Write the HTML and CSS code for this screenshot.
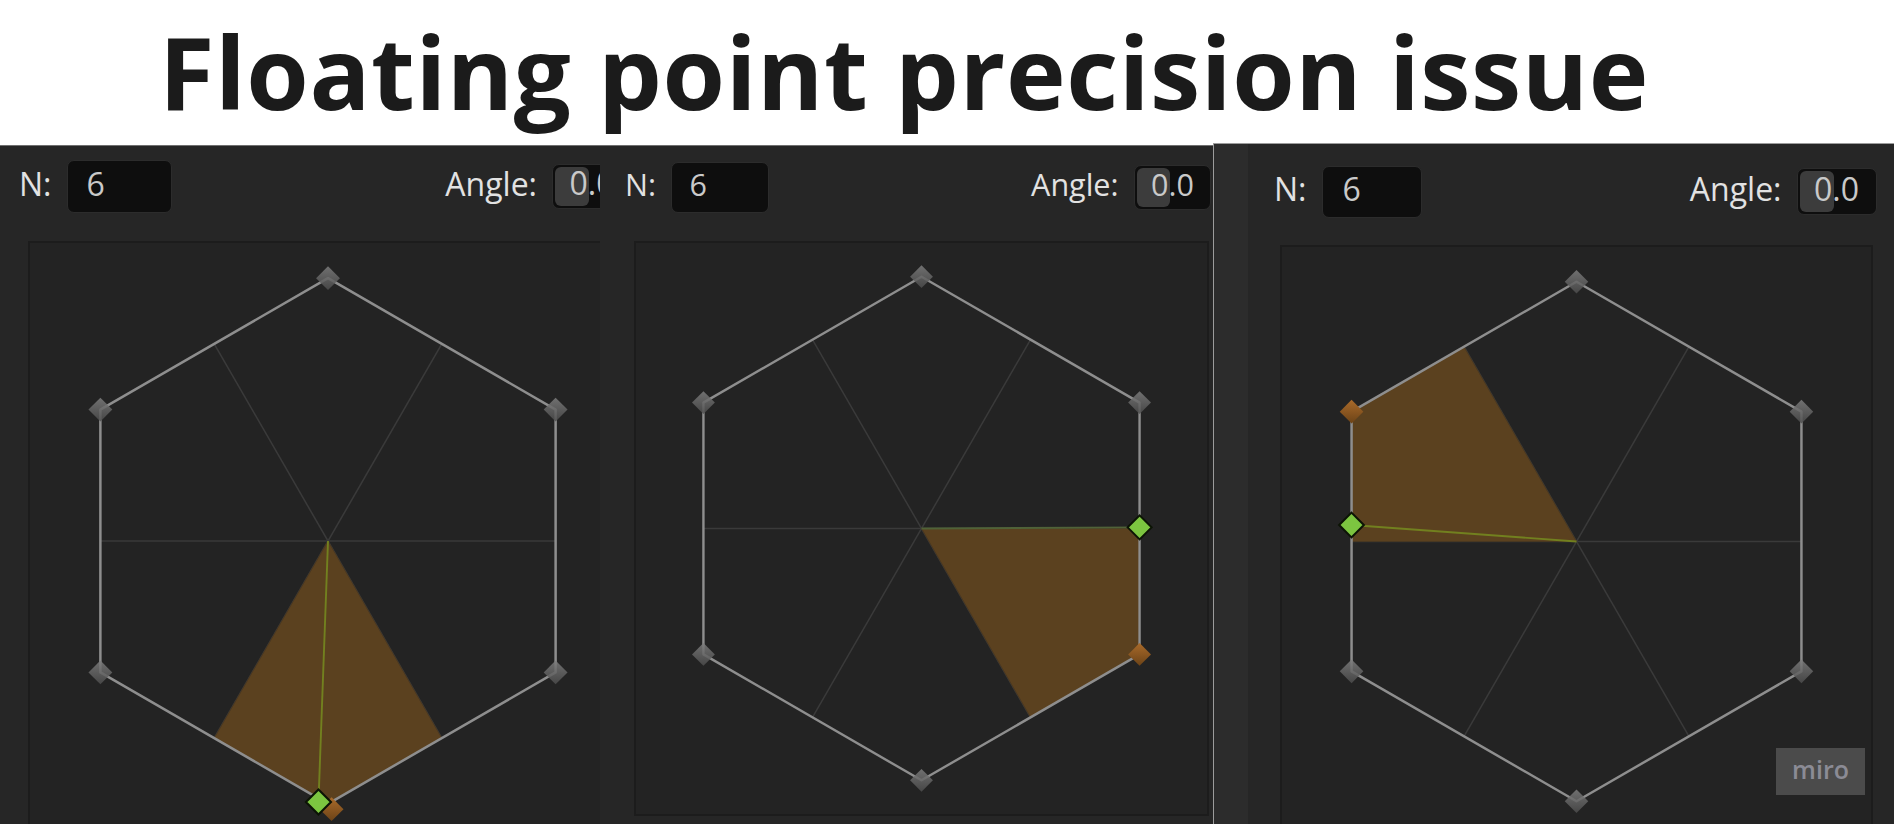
FILE: index.html
```html
<!DOCTYPE html>
<html lang="en">
<head>
<meta charset="utf-8">
<title>Floating point precision issue</title>
<link rel="stylesheet" href="styles.css">
</head>
<body>
<div class="page">
  <h1 class="title">Floating point precision issue</h1>
  <div class="panels">

    <section class="panel panel-1">
      <div class="window">
        <div class="toolbar">
          <div class="field"><span class="label">N:</span><span class="input input-n">6</span></div>
          <div class="field"><span class="label">Angle:</span><span class="input input-angle"><span class="grab"></span><span class="val">0.0</span></span></div>
        </div>
        <div class="canvas">
          <svg viewBox="0 0 1000 1000" preserveAspectRatio="none">
            <defs>
              <linearGradient id="g-grey" x1="0" y1="0" x2="0" y2="1">
                <stop offset="0" stop-color="#7e7e7e"/>
                <stop offset="1" stop-color="#4c4c4c"/>
              </linearGradient>
              <linearGradient id="g-orange" x1="0" y1="0" x2="0" y2="1">
                <stop offset="0" stop-color="#a96a2a"/>
                <stop offset="1" stop-color="#6c4317"/>
              </linearGradient>
              <polygon id="dia" points="0,-20 20,0 0,20 -20,0"/>
              <polygon id="dia-l" points="0,-21 21,0 0,21 -21,0"/>
            </defs>
            <g class="spokes">
              <line x1="118.1" y1="500" x2="881.9" y2="500"/>
              <line x1="309.05" y1="169.25" x2="690.95" y2="830.75"/>
              <line x1="690.95" y1="169.25" x2="309.05" y2="830.75"/>
            </g>
            <polygon class="wedge" points="500,500 309.05,830.75 500,941 690.95,830.75"/>
            <polygon class="hex" points="500,59 881.9,279.5 881.9,720.5 500,941 118.1,720.5 118.1,279.5"/>
            <line class="ray" x1="500" y1="500" x2="484" y2="938"/>
            <use href="#dia" class="d-grey" x="500" y="59"/>
            <use href="#dia" class="d-grey" x="881.9" y="279.5"/>
            <use href="#dia" class="d-grey" x="881.9" y="720.5"/>
            <use href="#dia" class="d-grey" x="118.1" y="720.5"/>
            <use href="#dia" class="d-grey" x="118.1" y="279.5"/>
            <use href="#dia" class="d-orange" x="506" y="950"/>
            <use href="#dia-l" class="d-green" x="484" y="938"/>
          </svg>
        </div>
      </div>
    </section>

    <section class="panel panel-2">
      <div class="window">
        <div class="toolbar">
          <div class="field"><span class="label">N:</span><span class="input input-n">6</span></div>
          <div class="field"><span class="label">Angle:</span><span class="input input-angle"><span class="grab"></span><span class="val">0.0</span></span></div>
        </div>
        <div class="canvas">
          <svg viewBox="0 0 1000 1000" preserveAspectRatio="none">
            <g class="spokes">
              <line x1="118.1" y1="500" x2="881.9" y2="500"/>
              <line x1="309.05" y1="169.25" x2="690.95" y2="830.75"/>
              <line x1="690.95" y1="169.25" x2="309.05" y2="830.75"/>
            </g>
            <polygon class="wedge" points="500,500 881.9,500 881.9,720.5 690.95,830.75"/>
            <polygon class="hex" points="500,59 881.9,279.5 881.9,720.5 500,941 118.1,720.5 118.1,279.5"/>
            <line class="ray ray-2" x1="500" y1="500" x2="882" y2="498"/>
            <use href="#dia" class="d-grey" x="500" y="59"/>
            <use href="#dia" class="d-grey" x="881.9" y="279.5"/>
            <use href="#dia" class="d-grey" x="500" y="941"/>
            <use href="#dia" class="d-grey" x="118.1" y="720.5"/>
            <use href="#dia" class="d-grey" x="118.1" y="279.5"/>
            <use href="#dia" class="d-orange" x="881.9" y="720.5"/>
            <use href="#dia-l" class="d-green" x="882" y="498"/>
          </svg>
        </div>
      </div>
    </section>

    <section class="panel panel-3">
      <div class="strip"></div>
      <div class="window">
        <div class="toolbar">
          <div class="field"><span class="label">N:</span><span class="input input-n">6</span></div>
          <div class="field"><span class="label">Angle:</span><span class="input input-angle"><span class="grab"></span><span class="val">0.0</span></span></div>
        </div>
        <div class="canvas">
          <svg viewBox="0 0 1000 1000" preserveAspectRatio="none">
            <g class="spokes">
              <line x1="118.1" y1="500" x2="881.9" y2="500"/>
              <line x1="309.05" y1="169.25" x2="690.95" y2="830.75"/>
              <line x1="690.95" y1="169.25" x2="309.05" y2="830.75"/>
            </g>
            <polygon class="wedge" points="500,500 118.1,500 118.1,279.5 309.05,169.25"/>
            <polygon class="hex" points="500,59 881.9,279.5 881.9,720.5 500,941 118.1,720.5 118.1,279.5"/>
            <line class="ray" x1="500" y1="500" x2="118" y2="472"/>
            <use href="#dia" class="d-grey" x="500" y="59"/>
            <use href="#dia" class="d-grey" x="881.9" y="279.5"/>
            <use href="#dia" class="d-grey" x="881.9" y="720.5"/>
            <use href="#dia" class="d-grey" x="500" y="941"/>
            <use href="#dia" class="d-grey" x="118.1" y="720.5"/>
            <use href="#dia" class="d-orange" x="118.1" y="279.5"/>
            <use href="#dia-l" class="d-green" x="118" y="472"/>
          </svg>
        </div>
      </div>
      <div class="badge">miro</div>
    </section>

  </div>
</div>
</body>
</html>
```
FILE: styles.css
```css
* {
  box-sizing: border-box;
  margin: 0;
  padding: 0;
}

html, body {
  width: 1894px;
  height: 824px;
  overflow: hidden;
  background: #ffffff;
}

body {
  font-family: "Open Sans", "Noto Sans", "DejaVu Sans", sans-serif;
}

.page {
  display: flex;
  flex-direction: column;
  height: 824px;
}

.title {
  flex: none;
  height: 145px;
  padding: 3px 0 0 159px;
  font-size: 101px;
  font-weight: 700;
  line-height: 1.362;
  letter-spacing: 0.55px;
  color: #1b1b1b;
  white-space: nowrap;
}

.panels {
  flex: 1;
  display: flex;
  align-items: stretch;
  min-height: 0;
}

.panel {
  position: relative;
  flex: none;
  display: flex;
  overflow: hidden;
  background: #262626;
  border-top: 1px solid #6f6f6f;
  color: #e2e2e2;
}

.panel-1 { width: 600px; }
.panel-2 { width: 613px; }
.panel-3 {
  flex: 1;
  margin-top: -2px;
  border-top-color: #9c9c9c;
  border-left: 1px solid #9c9c9c;
}

.strip {
  flex: none;
  width: 34px;
  background: #2c2c2c;
}

.window {
  flex: none;
  display: flex;
  flex-direction: column;
}

.toolbar {
  display: flex;
  align-items: center;
  justify-content: space-between;
}

.field {
  display: flex;
  align-items: center;
}

.label {
  line-height: 1.362;
  padding-bottom: 6px;
  white-space: nowrap;
}

.input {
  display: flex;
  align-items: center;
  position: relative;
  background: #0e0e0e;
  border: 1.5px solid #2c2c2c;
  border-radius: 7px;
  color: #c9c9c9;
  padding-bottom: 6px;
  line-height: 1;
}

.input-n {
  padding-left: 19px;
}

.input-angle {
  justify-content: center;
}

.grab {
  position: absolute;
  left: 2px;
  top: 2px;
  bottom: 2px;
  width: 44%;
  border-radius: 6px;
  background: #3c3c3c;
}

.val {
  position: relative;
}

.canvas {
  flex: none;
  background: #232323;
  border: 2px solid #1c1c1c;
}

.canvas svg {
  display: block;
  width: 100%;
  height: 100%;
}

/* panel 1 (cropped at both sides) */
.panel-1 .window {
  width: 641px;
  margin-left: -7px;
  font-size: 32px;
}
.panel-1 .toolbar { padding: 14px 2px 0 26px; }
.panel-1 .field { gap: 15px; }
.panel-1 .input-n { width: 105px; height: 53px; }
.panel-1 .input-angle { width: 80px; height: 45px; }
.panel-1 .canvas {
  width: 600px;
  height: 600px;
  margin: 28px 0 0 35px;
}

/* panel 2 */
.panel-2 .window {
  width: 613px;
  font-size: 30.5px;
}
.panel-2 .toolbar { padding: 16px 2px 0 25px; }
.panel-2 .field { gap: 15.5px; }
.panel-2 .input-n { width: 98px; height: 51px; padding-left: 17px; }
.panel-2 .input-angle { width: 77px; height: 45px; }
.panel-2 .canvas {
  width: 575px;
  height: 575px;
  margin: 27.5px 0 0 33.5px;
}

/* panel 3 */
.panel-3 .window {
  width: 646px;
  font-size: 32px;
}
.panel-3 .toolbar { padding: 22px 17.5px 0 26px; }
.panel-3 .field { gap: 15px; }
.panel-3 .input-n { width: 100px; height: 52px; padding-left: 20px; }
.panel-3 .input-angle { width: 80px; height: 47px; }
.panel-3 .canvas {
  width: 593px;
  height: 593px;
  margin: 27px 0 0 31.5px;
}

/* diagram */
.spokes line {
  stroke: #3a3a3a;
  stroke-width: 2.6;
}

.wedge {
  fill: #5b411f;
  stroke: #4a3720;
  stroke-width: 1.5;
}

.hex {
  fill: none;
  stroke: #8e8e8e;
  stroke-width: 4.2;
  stroke-linejoin: round;
}

.ray {
  stroke: #72801f;
  stroke-width: 3.2;
}

.ray-2 { stroke: #506238; }

.d-grey {
  fill: url(#g-grey);
  opacity: 0.85;
}

.d-orange {
  fill: url(#g-orange);
}

.d-green {
  fill: #7cc540;
  stroke: #0c1405;
  stroke-width: 3.5;
}

/* watermark overlay */
.badge {
  position: absolute;
  right: 29px;
  bottom: 29px;
  width: 89px;
  height: 47px;
  padding-bottom: 4px;
  background: #4b4b4b;
  color: #8b8b95;
  font-size: 25px;
  font-weight: 600;
  line-height: 43px;
  text-align: center;
}
```
